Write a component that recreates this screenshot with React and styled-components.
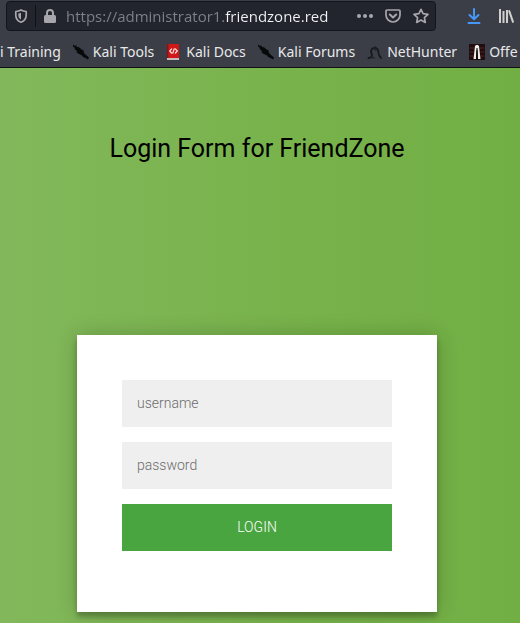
import React from "react";
import styled, { createGlobalStyle } from "styled-components";

const GlobalStyle = createGlobalStyle`
  * { box-sizing: border-box; }
  html, body { margin: 0; }
  body { font-family: "Noto Sans", sans-serif; background: #78b24b; }
`;

const Window = styled.div`
  min-height: 100vh;
  display: flex;
  flex-direction: column;
  overflow: hidden;
`;

const Chrome = styled.header`
  background: #3b3e46;
  border-bottom: 1px solid #101114;
`;

const Toolbar = styled.div`
  display: flex;
  align-items: center;
  gap: 30px;
  padding: 1px 6px 0;
`;

const AddressBar = styled.div`
  flex: 1;
  min-width: 0;
  height: 30px;
  display: flex;
  align-items: center;
  background: #23252e;
  border: 1px solid #14151a;
  border-radius: 4px;
  padding: 0 6px;
`;

const IconButton = styled.button`
  flex: none;
  display: flex;
  padding: 0;
  border: 0;
  background: none;
  color: ${(p) => p.$color || "#a6a6ac"};
`;

const Divider = styled.span`
  width: 1px;
  height: 22px;
  margin: 0 6px;
  background: #0f1014;
`;

const UrlInput = styled.input`
  flex: 1;
  min-width: 0;
  height: 24px;
  margin-left: 8px;
  padding: 0;
  border: 0;
  outline: 0;
  font: 15px/24px "Open Sans", sans-serif;
  color: transparent;
  background: linear-gradient(to right, #7f8189 159px, #f4f4f6 159px);
  background-clip: text;
  -webkit-background-clip: text;
`;

const PageActions = styled.div`
  display: flex;
  gap: 12px;
`;

const WindowActions = styled.div`
  display: flex;
  gap: 16px;
`;

const Bookmarks = styled.nav`
  height: 36px;
  display: flex;
  align-items: center;
  gap: 12px;
  padding-top: 5px;
  overflow: hidden;
`;

const Bookmark = styled.a`
  flex: none;
  display: flex;
  align-items: center;
  gap: 4px;
  color: #e8e8ea;
  font-size: 14px;
  line-height: 20px;
  white-space: nowrap;
  text-decoration: none;
`;

const Page = styled.main`
  flex: 1;
  display: flex;
  flex-direction: column;
  align-items: center;
  gap: 170px;
  padding: 64px 6px 11px 0;
  background: linear-gradient(to right, #82b85b, #77b24a 60%, #71af44);
`;

const Title = styled.h1`
  margin: 0;
  font: 400 25px/33px Roboto, sans-serif;
  color: #000;
`;

const LoginForm = styled.form`
  width: 100%;
  max-width: 360px;
  display: flex;
  flex-direction: column;
  gap: 15px;
  padding: 45px 45px 61px;
  background: #fff;
  box-shadow: 0 0 20px rgba(0, 0, 0, 0.2), 0 5px 5px rgba(0, 0, 0, 0.24);
`;

const Field = styled.input`
  width: 100%;
  height: 47px;
  padding: 14px 15px 16px;
  border: 0;
  border-radius: 0;
  outline: 0;
  background: #efefef;
  font: 300 14px/17px Roboto, sans-serif;
  color: #222;
  &::placeholder { color: #6c6c6c; opacity: 1; }
`;

const SubmitButton = styled.button`
  height: 47px;
  border: 0;
  background: #49a540;
  color: #fff;
  font: 300 14px/17px Roboto, sans-serif;
`;

const Svg = ({ size = 16, children, ...rest }) => (
  <svg width={size} height={size} viewBox="0 0 16 16" fill="none" stroke="currentColor" strokeWidth="2" strokeLinecap="round" strokeLinejoin="round" aria-hidden="true" {...rest}>
    {children}
  </svg>
);

const ShieldIcon = () => (
  <Svg>
    <path d="M8 2C6.300 3 4.300 3.400 2.800 3.500V7.200C2.800 10.500 4.600 12.900 8 14.200C11.400 12.900 13.200 10.500 13.200 7.200V3.500C11.700 3.400 9.700 3 8 2Z" strokeWidth="1.700" />
    <path d="M8 4.700V11.500C6.200 10.500 5.300 9 5.300 7V5.400C6.300 5.300 7.200 5.100 8 4.700Z" fill="currentColor" stroke="none" />
  </Svg>
);

const LockIcon = () => (
  <Svg>
    <rect x="2" y="7" width="12" height="8" rx="1.500" fill="currentColor" stroke="none" />
    <path d="M5 8V5A3 3 0 0 1 11 5V8" />
  </Svg>
);

const DotsIcon = () => (
  <Svg fill="currentColor" stroke="none">
    <circle cx="2" cy="8" r="2" /><circle cx="8" cy="8" r="2" /><circle cx="14" cy="8" r="2" />
  </Svg>
);

const PocketIcon = () => (
  <Svg>
    <path d="M2 2H14A1 1 0 0 1 15 3V7A7 7 0 0 1 1 7V3A1 1 0 0 1 2 2Z" strokeWidth="1.700" />
    <path d="M4.800 6.500L8 9.500L11.200 6.500" />
  </Svg>
);

const StarIcon = () => (
  <Svg>
    <path d="M8 1.300L10.100 5.700L15 6.300L11.400 9.600L12.300 14.400L8 12L3.700 14.400L4.600 9.600L1 6.300L5.900 5.700Z" strokeWidth="1.700" />
  </Svg>
);

const DownloadIcon = () => (
  <Svg>
    <path d="M8 1V11M3.500 7L8 11.300L12.500 7M2.500 15H13.500" />
  </Svg>
);

const LibraryIcon = () => (
  <Svg strokeLinecap="butt">
    <path d="M2 1V15M5.500 3V15M9 2V15M11 2.400L15.200 14.600" strokeWidth="2" />
  </Svg>
);

const DragonIcon = () => (
  <Svg fill="#08090b" stroke="none">
    <path d="M0 0.500L2 2L3 1L4 3L6 3.200L8 5L10.500 6.500L11 9L13 11L16 13.500L15 15.500L12.500 14L10 13L9 11.500L6 10L3.500 8.500L4 7L1.500 5L2 4L0 2.500Z" />
  </Svg>
);

const DocsIcon = () => (
  <Svg stroke="none">
    <rect x="1" y="0" width="12" height="15" rx="0.500" fill="#d01818" />
    <path d="M1 14H13V16H1Z" fill="#c9b9b9" />
    <path d="M1 0H2.500V14H1Z" fill="#8e1015" />
    <path d="M5.600 5L3.700 7L5.600 9M9.400 5L11.300 7L9.400 9M8.200 4.800L6.800 9.200" stroke="#f6dede" strokeWidth="1.200" />
  </Svg>
);

const HunterIcon = () => (
  <Svg>
    <path d="M1.500 14C5 13.500 5.800 11.800 4.500 9.500C3.300 7 4.500 4.500 7 3.800C10 3.500 11.500 6 11.500 9C11.600 11 12.800 12.500 14 14" stroke="#18191c" strokeWidth="1.800" />
    <path d="M6 4L8.500 2L10 5L8.500 7L7 5Z" fill="#202125" stroke="none" />
    <path d="M1 14.300C4 12.500 7 12.800 8.500 14.300Z" fill="#202125" stroke="none" />
  </Svg>
);

const OffensiveIcon = () => (
  <Svg stroke="none">
    <rect width="16" height="16" fill="#210d0f" />
    <path d="M1 4H5M11 4H15M1 8H4M12 8H15M1 12H4M12 12H15" stroke="#542426" strokeWidth="1" />
    <path d="M6 2C6.500 0.500 9.500 0.500 10 2L11.500 15H9L8.500 6H7.500L7 15H4.500Z" fill="#eeeeec" />
    <path d="M7.500 4H8.500L9 16H7Z" fill="#15090a" />
  </Svg>
);

const links = [
  { label: "i Training" },
  { label: "Kali Tools", Icon: DragonIcon },
  { label: "Kali Docs", Icon: DocsIcon },
  { label: "Kali Forums", Icon: DragonIcon },
  { label: "NetHunter", Icon: HunterIcon },
  { label: "Offe", Icon: OffensiveIcon },
];

export default function App() {
  return (
    <Window>
      <GlobalStyle />
      <Chrome>
        <Toolbar>
          <AddressBar>
            <IconButton aria-label="Tracking protection"><ShieldIcon /></IconButton>
            <Divider />
            <IconButton aria-label="Connection secure"><LockIcon /></IconButton>
            <UrlInput aria-label="Address" defaultValue="https://administrator1.friendzone.red" spellCheck={false} />
            <PageActions>
              <IconButton aria-label="Page actions"><DotsIcon /></IconButton>
              <IconButton aria-label="Save to Pocket"><PocketIcon /></IconButton>
              <IconButton aria-label="Bookmark this page"><StarIcon /></IconButton>
            </PageActions>
          </AddressBar>
          <WindowActions>
            <IconButton aria-label="Downloads" $color="#4598f8"><DownloadIcon /></IconButton>
            <IconButton aria-label="Library" $color="#cfcfcd"><LibraryIcon /></IconButton>
          </WindowActions>
        </Toolbar>
        <Bookmarks aria-label="Bookmarks">
          {links.map(({ label, Icon }) => (
            <Bookmark key={label} href="#">
              {Icon && <Icon />}
              {label}
            </Bookmark>
          ))}
        </Bookmarks>
      </Chrome>
      <Page>
        <Title>Login Form for FriendZone</Title>
        <LoginForm onSubmit={(e) => e.preventDefault()}>
          <Field type="text" name="username" placeholder="username" aria-label="username" />
          <Field type="password" name="password" placeholder="password" aria-label="password" />
          <SubmitButton type="submit">LOGIN</SubmitButton>
        </LoginForm>
      </Page>
    </Window>
  );
}
